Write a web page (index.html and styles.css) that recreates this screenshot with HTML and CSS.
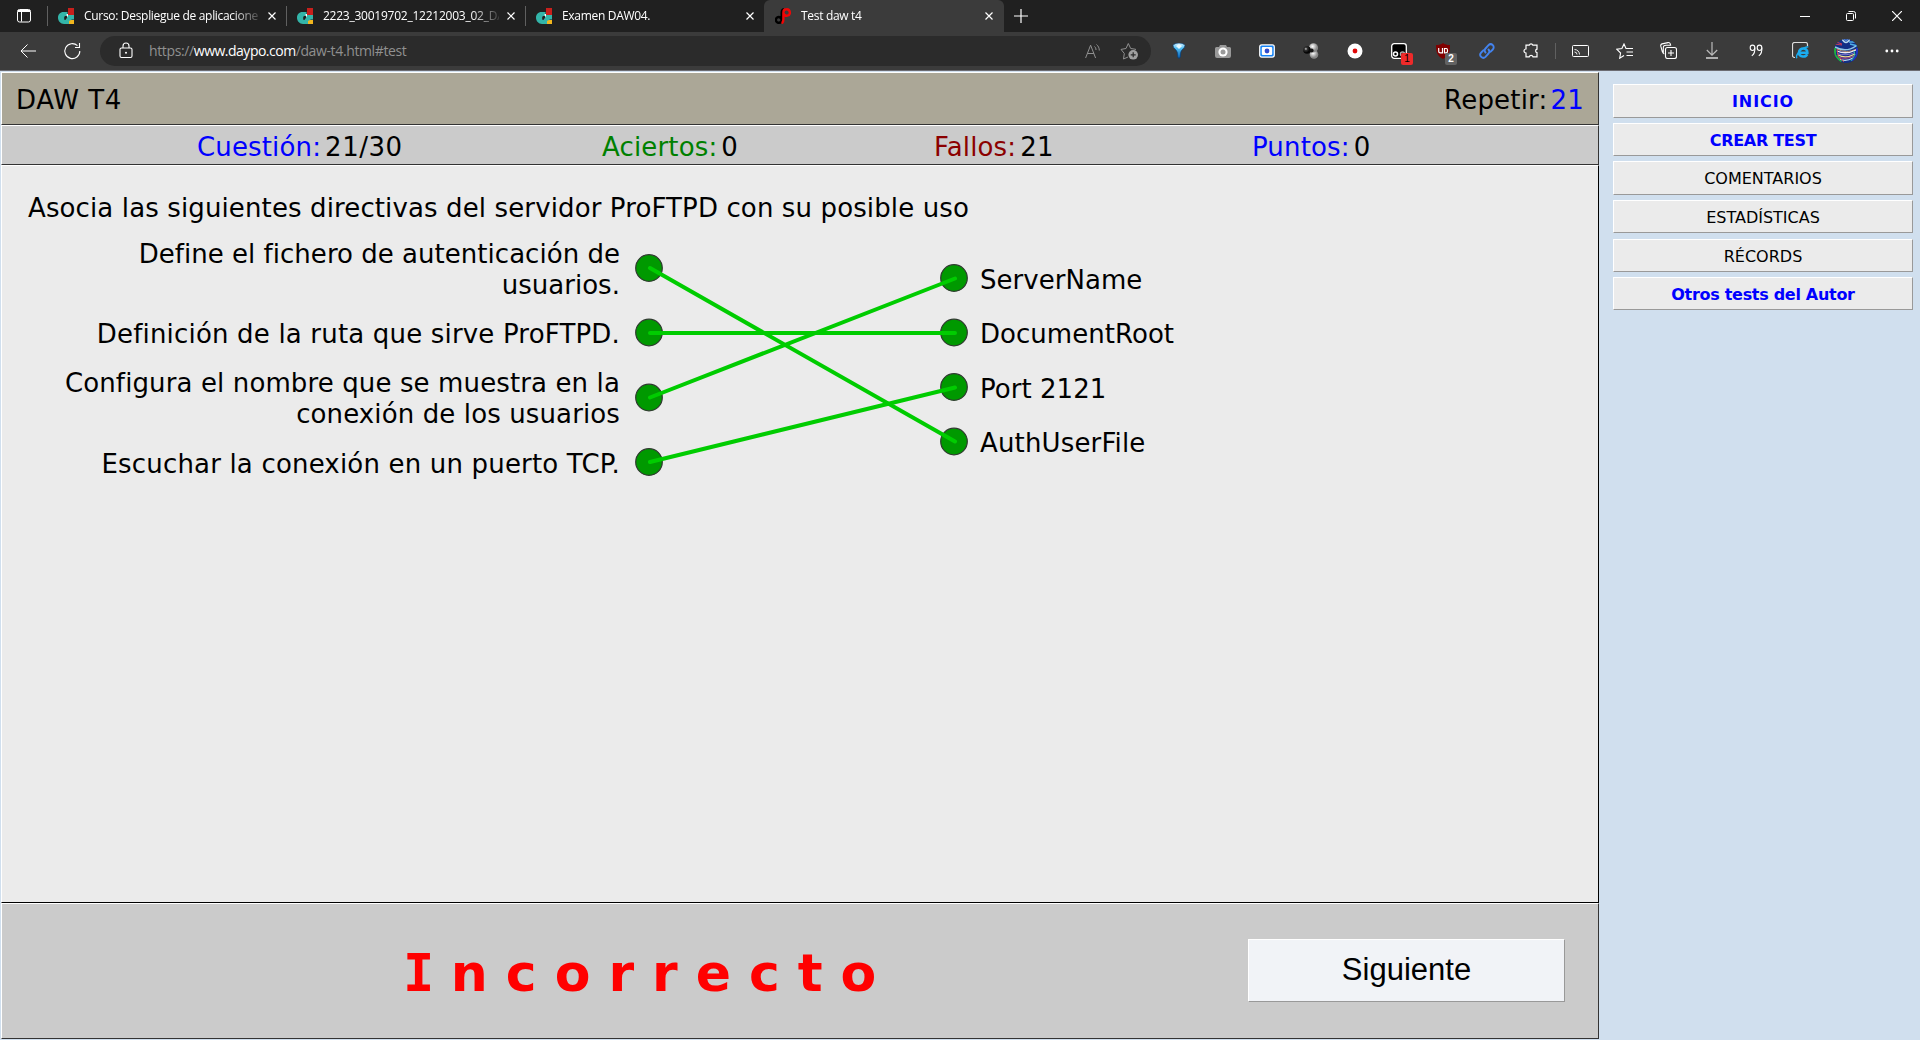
FILE: index.html
```
<!DOCTYPE html>
<html lang="es">
<head>
<meta charset="utf-8">
<title>Test daw t4</title>
<link rel="stylesheet" href="styles.css">
</head>
<body>
<svg class="defs" aria-hidden="true">
  <symbol id="course" viewBox="0 0 16 16">
    <path d="M10 0h6v7h-6z" fill="#c8201c"/>
    <path d="M11 12h5v4h-5z" fill="#f2b61e"/>
    <path d="M9.500 4H5.500C2 4 0 6.500 0 9.800S2.500 16 6 16h5v-3l3-1.500h2V7h-6.500z" fill="#33b5a9"/>
    <path d="M7 8h2v2.500H8v1.200H6.200V9z" fill="#202020"/>
    <path d="M8.500 6H10v2.500H9z" fill="#fff"/>
  </symbol>
  <symbol id="close" viewBox="0 0 8 8"><path d="M.5.5l7 7m0-7l-7 7" stroke="#fff" stroke-width="1.200" fill="none"/></symbol>
</svg>
<header class="browser">
  <div class="tabstrip">
    <div class="tab-menu">
      <svg width="16" height="16" viewBox="0 0 16 16" fill="none" stroke="#fff"><rect x="1.500" y="1.500" width="13" height="12.500" rx="2"/><path d="M2 3.500h12M5.500 4v9.500" /><path d="M2 3h12" stroke-width="2"/></svg>
    </div>
    <div class="tab"><svg class="fav"><use href="#course"/></svg><span class="tab-title">Curso: Despliegue de aplicacione</span><svg class="x"><use href="#close"/></svg></div>
    <div class="tab"><svg class="fav"><use href="#course"/></svg><span class="tab-title digits">2223_30019702_12212003_02_DA</span><svg class="x"><use href="#close"/></svg></div>
    <div class="tab"><svg class="fav"><use href="#course"/></svg><span class="tab-title">Examen DAW04.</span><svg class="x"><use href="#close"/></svg></div>
    <div class="tab active"><svg class="fav" viewBox="0 0 16 16" fill="none" stroke-width="2.400"><path d="M9 1.200C7 1.500 6.700 3 6.700 5v6.500c0 2-1 3.300-2.700 3.300a2.800 2.900 0 1 1 2.500-3" stroke="#000"/><path d="M6.500 15.300C8 15 8.400 13.500 8.400 11V4.500C8.400 2.500 9.500 1.300 11.500 1.300a3.200 3.200 0 1 1-2.900 4.200" stroke="#f00606"/></svg><span class="tab-title">Test daw t4</span><svg class="x"><use href="#close"/></svg></div>
    <svg class="newtab" viewBox="0 0 14 14"><path d="M7 0v14M0 7h14" stroke="#fff" stroke-width="1.200"/></svg>
    <div class="window-buttons">
      <span><svg width="10" height="10"><path d="M0 5.500h10" stroke="#fff"/></svg></span>
      <span><svg width="10" height="10" fill="none" stroke="#fff"><rect x=".5" y="2.500" width="7" height="7" rx="1"/><path d="M2.500 .5h5a2 2 0 0 1 2 2v5"/></svg></span>
      <span><svg width="10" height="10"><path d="M0 0l10 10M10 0L0 10" stroke="#fff" stroke-width="1.200"/></svg></span>
    </div>
  </div>
  <div class="toolbar">
    <span class="nav"><svg width="16" height="14" viewBox="0 0 16 14" fill="none" stroke="#fff"><path d="M16 7H1M7.500 .5L1 7l6.500 6.500"/></svg></span>
    <span class="nav"><svg width="18" height="18" viewBox="0 0 18 18" fill="none" stroke="#fff" stroke-width="1.100"><path d="M16.800 9A7.500 7.500 0 1 1 14.500 3.700M16.500 1v4.500H12"/></svg></span>
    <div class="address">
      <svg class="lock" width="14" height="17" viewBox="0 0 14 17" fill="none" stroke="#fff" stroke-width="1.100"><rect x="1" y="6" width="12" height="9.500" rx="1.500"/><path d="M4 6V4a3 3 0 0 1 6 0v2"/><circle cx="7" cy="10.800" r="1" fill="#fff" stroke="none"/></svg>
      <span class="url">https://<b>www.daypo.com</b>/daw-t4.html#test</span>
      <svg class="read" width="16" height="16" viewBox="0 0 16 16" fill="none" stroke="#909090"><path d="M.6 15L5.600 2.200 10.600 15M2.300 10.500H9"/><path d="M9.500 3.500c1 .8 1.500 2 1.500 3.500M11.500 1.500C13.300 3 14.300 5 14.300 7.500" /></svg>
      <svg class="fav-add" width="18" height="18" viewBox="0 0 18 18" fill="none" stroke="#909090"><path d="M8 15l-4.500 2 .8-5.500L1 7.400 6 6.500 8.300 1.500 10.700 6.500l5 .8-1 1"/><circle cx="13.200" cy="12.800" r="4.800" fill="#a0a0a0" stroke="none"/><path d="M13.200 10.300v5M10.700 12.800h5" stroke="#2b2b2b" stroke-width="1.200"/></svg>
    </div>
    <div class="tools">
      <span><svg width="16" height="16" viewBox="0 0 16 16"><defs><linearGradient id="gem" x2="0" y2="1"><stop offset="0" stop-color="#d7f3ff"/><stop offset=".35" stop-color="#51bdf2"/><stop offset="1" stop-color="#0458ac"/></linearGradient></defs><path d="M8 0c3 0 5.500 1.200 6 2.500-.3 3-3.800 4-4.300 7L9.300 14 8 15.500 6.700 14 6.300 9.500C5.800 6.500 2 5.500 2 2.500 2.500 1.200 5 0 8 0z" fill="url(#gem)" stroke="#063d77" stroke-width=".7"/><path d="M5 3l3 3 3-3-3-2z" fill="#e9f9ff"/></svg></span>
      <span><svg width="16" height="16" viewBox="0 0 16 16"><path d="M1.500 4H4l1-2h6l1 2h2.500A1.500 1.500 0 0 1 16 5.500V13a2 2 0 0 1-2 2H2a2 2 0 0 1-2-2V5.500A1.500 1.500 0 0 1 1.500 4z" fill="#999"/><circle cx="8" cy="9" r="4.600" fill="#fff"/><circle cx="8" cy="9" r="2.500" fill="#9a9a9a"/></svg></span>
      <span><svg width="16" height="14" viewBox="0 0 16 14"><rect x=".7" y=".9" width="14.600" height="12.200" rx="2" fill="#1683f5" stroke="#fff" stroke-width="1.200"/><rect x="2.800" y="3" width="10.400" height="8" rx="1" fill="#fff"/><circle cx="8" cy="7" r="2.400" fill="#304acb"/></svg></span>
      <span><svg width="16" height="16" viewBox="0 0 16 16"><defs><radialGradient id="b1" cx=".4" cy=".35"><stop offset="0" stop-color="#fff"/><stop offset="1" stop-color="#888"/></radialGradient><radialGradient id="b2" cx=".35" cy=".35"><stop offset="0" stop-color="#ccc"/><stop offset=".4" stop-color="#333"/><stop offset="1" stop-color="#050505"/></radialGradient></defs><circle cx="11" cy="11.500" r="4.300" fill="url(#b1)"/><circle cx="10.500" cy="4.800" r="4.600" fill="url(#b1)"/><circle cx="4" cy="7" r="3.800" fill="url(#b2)"/><circle cx="8.600" cy="7.500" r="2" fill="#151515"/></svg></span>
      <span><svg width="16" height="16"><circle cx="8" cy="8" r="7.500" fill="#fff"/><circle cx="8" cy="8" r="2.400" fill="#e00808"/></svg></span>
      <span><svg width="16" height="16" viewBox="0 0 16 16"><rect x=".7" y=".7" width="14.600" height="14.600" rx="2.500" fill="#000" stroke="#fff" stroke-width="1.300"/><circle cx="4.500" cy="11" r="2" fill="none" stroke="#fff" stroke-width="1.500"/><circle cx="11.500" cy="11" r="2" fill="none" stroke="#aaa" stroke-width="1.500"/></svg><i class="badge red">1</i></span>
      <span><svg width="16" height="16" viewBox="0 0 16 16"><path d="M8 0c2 1.500 4 2 7 2 0 7-1 11-7 14C2 13 1 9 1 2c3 0 5-.5 7-2z" fill="#800000"/><path d="M3.700 5v3.500q0 1.300 1.700 1.300H7.500V5M9.500 9.800V5.500h1.700q1.300 0 1.300 1.700v1q0 1.600-1.600 1.600z" fill="none" stroke="#fff" stroke-width="1.200"/></svg><i class="badge grey">2</i></span>
      <span><svg width="16" height="16" viewBox="0 0 16 16" fill="none" stroke="#4383ee" stroke-width="1.900" stroke-linecap="round"><path d="M6.500 9.500a3 3 0 0 1 0-4L9.500 2.200a3 3 0 0 1 4.300 4.300L11.700 8.700"/><path d="M9.500 6.500a3 3 0 0 1 0 4L6.500 13.800a3 3 0 0 1-4.300-4.300L4.300 7.300"/></svg></span>
      <span><svg width="16" height="16" viewBox="0 0 16 16" fill="none" stroke="#fff" stroke-width="1.200"><path d="M3 2.200h3.200a2 2 0 0 1 3.700 0H14v4a1.800 1.800 0 0 0 0 3.500v4.100h-4a2 2 0 0 0-3.800 0H3V10a2 2 0 1 1 0-4z"/></svg></span>
    </div>
    <div class="tools browser-tools">
      <span><svg width="17" height="14" viewBox="0 0 17 14" fill="none" stroke="#fff"><rect x=".5" y="1.500" width="16" height="11" rx="1"/><path d="M2.500 5.500a5 5 0 0 1 5 5M2.500 8a2.500 2.500 0 0 1 2.500 2.500" stroke-width=".9"/></svg></span>
      <span><svg width="17" height="16" viewBox="0 0 17 16" fill="none" stroke="#fff" stroke-width="1.100"><path d="M8 12.500l-4.300 2.700.9-5.200L.9 6.300 5.900 5.600 8 1l2 4.500h7M10.500 9H17M10.500 12.500H17"/></svg></span>
      <span><svg width="17" height="17" viewBox="0 0 17 17" fill="none" stroke="#fff" stroke-width="1.100"><rect x="5.500" y="5.500" width="11" height="11" rx="2"/><path d="M11 8v6M8 11h6M4.300 12C2.800 11.500 2.500 10.500 2.300 9.500L.8 4.200C.5 3 1 2.200 2 1.900L8 .6c1.200-.2 2 .4 2.300 1.300l.3 1.300H6C4 3.200 3.300 4 3.300 6v5"/></svg></span>
      <span><svg width="14" height="17" viewBox="0 0 14 17" fill="none" stroke="#fff" stroke-width="1.200"><path d="M7 0v13M1.800 8L7 13.200 12.200 8" stroke="#bbb"/><path d="M1 16h12"/></svg></span>
      <span><svg width="14" height="13" viewBox="0 0 14 13" fill="none" stroke="#fff" stroke-width="1.100"><ellipse cx="3.500" cy="3.800" rx="2.300" ry="2.700"/><path d="M5.800 3.500c.4 4-.4 6.500-3 8.300"/><ellipse cx="10.500" cy="3.800" rx="2.300" ry="2.700"/><path d="M12.800 3.500c.4 4-.4 6.500-3 8.300"/></svg></span>
      <span><svg width="17" height="17" viewBox="0 0 17 17" fill="none"><path d="M3 15.500H2.500a2 2 0 0 1-2-2v-11a2 2 0 0 1 2-2h11a2 2 0 0 1 2 2V4" stroke="#ddd" stroke-width="1.200"/><path d="M15.200 12.300c-1.200 3.200-8 3.300-8.200-1.700C7 5.200 15.500 5 15.400 10.700H8" stroke="#1bacf0" stroke-width="2.500"/><path d="M5 16.200C3 14 9 5.200 16.300 4.700" stroke="#1bacf0" stroke-width="1.400"/></svg></span>
    </div>
    <svg class="avatar" width="24" height="24" viewBox="0 0 24 24" fill="none">
      <defs><clipPath id="face"><circle cx="12" cy="12" r="12"/></clipPath></defs>
      <g clip-path="url(#face)"><path d="M0 0h24v24H0z" fill="#122f86"/>
      <path d="M0 5l8 1M2 3l6 2" stroke="#c23a55" stroke-width="1.200"/><path d="M16 5l8 2M15 3l6 0" stroke="#4fb0e8" stroke-width="1.300"/><path d="M8 0q4 7 8 0" stroke="#b8d8ef" stroke-width="1.500"/><path d="M10 0q2 3 4 0" stroke="#5585d0" stroke-width="1.500"/>
      <path d="M1 8q11 6 21-1" stroke="#8fc7e8" stroke-width="1.500"/><path d="M3 10q9 5 20 0" stroke="#e9a95f" stroke-width=".8"/><path d="M3 12q9 4 19-1" stroke="#efe9f5" stroke-width="1.300"/><path d="M3 14.500q9 3 18-1" stroke="#8d7bd8" stroke-width=".9"/><path d="M4 16q8 4 17-1" stroke="#f0dc8c" stroke-width="1.200"/><path d="M4 18q8 3 16-1" stroke="#e34b7e" stroke-width=".8"/><path d="M5 20q7 3 14-1" stroke="#bcdcf0" stroke-width="1.200"/><path d="M1 9v7l6 7" stroke="#1fae3d" stroke-width="2"/><path d="M3 10l1 7 6 6" stroke="#e8443b" stroke-width=".8"/><path d="M23 9v8l-5 5" stroke="#2233c8" stroke-width="2"/><path d="M20 12l1 4-4 6" stroke="#2ec5a5" stroke-width=".9"/></g>
    </svg>
    <svg class="more" width="14" height="4" fill="#fff"><circle cx="1.800" cy="2" r="1.400"/><circle cx="7" cy="2" r="1.400"/><circle cx="12.200" cy="2" r="1.400"/></svg>
  </div>
</header>
<div class="page">
  <main class="test">
    <div class="panel title-bar">
      <span class="name">DAW T4</span>
      <span class="stat"><span>Repetir:</span><span class="blue">21</span></span>
    </div>
    <div class="panel status-bar">
      <span class="stat"><span class="blue">Cuestión:</span><span class="count">21/30</span></span>
      <span class="stat"><span class="green">Aciertos:</span><span>0</span></span>
      <span class="stat"><span class="maroon">Fallos:</span><span>21</span></span>
      <span class="stat"><span class="blue">Puntos:</span><span>0</span></span>
    </div>
    <section class="panel question">
      <p class="statement">Asocia las siguientes directivas del servidor ProFTPD con su posible uso</p>
      <div class="board">
        <ul class="left">
          <li>Define el fichero de autenticación de usuarios.</li>
          <li class="wide">Definición de la ruta que sirve ProFTPD.</li>
          <li class="mid">Configura el nombre que se muestra en la conexión de los usuarios</li>
          <li class="wide">Escuchar la conexión en un puerto TCP.</li>
        </ul>
        <svg class="links" width="340" height="260" viewBox="0 0 340 260">
          <g fill="#090" stroke="#303a30" stroke-width="1.200">
            <circle cx="18" cy="33" r="13.300"/><circle cx="18" cy="97.500" r="13.300"/><circle cx="18" cy="162.500" r="13.300"/><circle cx="18" cy="227" r="13.300"/>
            <circle cx="323" cy="43" r="13.300"/><circle cx="323" cy="97.500" r="13.300"/><circle cx="323" cy="152" r="13.300"/><circle cx="323" cy="206.500" r="13.300"/>
          </g>
          <g stroke="#0c0" stroke-width="4" stroke-linecap="round">
            <path d="M19 33l305 173.500M19 98h305M19 162.500L324 43.500M19 227L324 152.500"/>
          </g>
        </svg>
        <ul class="right">
          <li>ServerName</li>
          <li>DocumentRoot</li>
          <li>Port 2121</li>
          <li class="wide">AuthUserFile</li>
        </ul>
      </div>
    </section>
    <footer class="panel result">
      <strong class="verdict"><span class="cap">I</span>ncorrecto</strong>
      <button class="next">Siguiente</button>
    </footer>
  </main>
  <nav class="side">
    <a class="key home">INICIO</a>
    <a class="key">CREAR TEST</a>
    <a>COMENTARIOS</a>
    <a>ESTADÍSTICAS</a>
    <a>RÉCORDS</a>
    <a class="key">Otros tests del Autor</a>
  </nav>
</div>
</body>
</html>
```
FILE: styles.css
```
* { box-sizing: border-box; }
body {
  margin: 0;
  height: 1040px;
  overflow: hidden;
  background: #d0dfee;
  color: #000;
  font: 26px/31px "DejaVu Sans", Verdana, sans-serif;
}
.defs { display: none; }
svg { display: block; flex: none; }
ul, p { margin: 0; padding: 0; list-style: none; }

/* browser chrome */
.browser { font: 12px/16px "Open Sans", "Segoe UI", sans-serif; color: #fff; }
.tabstrip { display: flex; align-items: center; height: 32px; background: #202020; }
.tab-menu { display: flex; justify-content: center; width: 47px; }
.tab {
  display: flex;
  align-items: center;
  width: 239px;
  height: 32px;
  padding-left: 11px;
  background: linear-gradient(#606060, #606060) 0 6px / 1px 20px no-repeat;
}
.tab.active { width: 240px; background: #3b3b3b; border-radius: 6px 6px 0 0; }
.fav { width: 16px; height: 16px; }
.tab-title {
  width: 176px;
  margin-left: 10px;
  white-space: nowrap;
  letter-spacing: -.31px;
  -webkit-mask-image: linear-gradient(to right, #000 148px, transparent 180px);
  mask-image: linear-gradient(to right, #000 148px, transparent 180px);
}
.digits { letter-spacing: -.24px; }
.x { width: 8px; height: 8px; margin-left: 8px; }
.newtab { width: 14px; height: 14px; margin-left: 10px; }
.window-buttons { display: flex; margin-left: auto; }
.window-buttons span { display: flex; justify-content: center; width: 46px; }

.toolbar {
  display: flex;
  align-items: center;
  height: 39px;
  padding: 0 21px 1px 6px;
  background: #3b3b3b;
  border-bottom: 1px solid #6c6c72;
}
.nav { display: flex; justify-content: center; width: 44px; }
.address {
  display: flex;
  align-items: center;
  width: 1051px;
  height: 30px;
  margin-left: 6px;
  padding-left: 19px;
  border-radius: 15px;
  background: #2b2b2b;
}
.url { margin-left: 16px; padding-top: 1px; font-size: 14px; line-height: 20px; letter-spacing: -.37px; color: #909090; }
.url b { font-weight: 400; color: #fff; letter-spacing: -.5px; }
.read { margin-left: auto; }
.fav-add { margin: 0 13px 0 19px; }
.tools { display: flex; margin-left: 6px; }
.tools span { position: relative; display: flex; align-items: center; justify-content: center; width: 44px; height: 36px; }
.browser-tools { margin-left: 2px; padding-left: 3px; background: linear-gradient(#606060, #606060) 0 10px / 1px 16px no-repeat; }
.badge {
  position: absolute;
  left: 24px;
  top: 20px;
  width: 12px;
  height: 12px;
  border-radius: 2px;
  font: 10px/12px "Liberation Sans", sans-serif;
  text-align: center;
}
.red { background: #ee2a2a; color: #000; }
.grey { background: #626262; color: #fff; font-weight: 700; }
.avatar { margin-left: 12px; }
.more { margin-left: auto; }

/* page */
.page { display: flex; padding: 1px 0 0 1px; }
.test { width: 1598px; }
.panel {
  display: flex;
  border: 1px solid #fff;
  border-right-color: #333;
  border-bottom-color: #333;
  background: #cbcbcb;
}
.blue { color: #00f; }
.green { color: #008000; }
.maroon { color: #8b0000; }
.stat { display: flex; gap: 4px; }
.title-bar {
  align-items: center;
  justify-content: space-between;
  height: 53px;
  padding: 4px 14px 0;
  background: #aba797;
  letter-spacing: .2px;
}
.name { letter-spacing: .6px; }
.title-bar .stat { gap: 3px; }
.status-bar {
  display: grid;
  grid-template-columns: 405px 332px 318px 1fr;
  align-items: center;
  height: 40px;
  padding: 4px 0 0 195px;
  letter-spacing: .15px;
}
.count { letter-spacing: .5px; }
.question {
  flex-direction: column;
  height: 738px;
  padding: 27px 0 0 26px;
  background: #ebebeb;
  border-right-color: #000;
  border-bottom-color: #000;
}
.statement { letter-spacing: .122px; }
.board { display: flex; margin-top: 11px; }
.left { width: 592px; text-align: right; letter-spacing: .03px; }
.left li { display: flex; flex-direction: column; justify-content: center; height: 65px; padding: 3px 0 0 20px; }
.left li:first-child { padding-top: 4px; }
.left .mid { letter-spacing: .12px; }
.left .wide { letter-spacing: .18px; }
.links { margin-left: 11px; }
.right { padding-top: 16px; margin-left: 9px; letter-spacing: .04px; }
.right li { display: flex; align-items: center; height: 54.5px; padding-top: 4px; }
.right .wide { letter-spacing: .15px; }
.result { align-items: center; height: 136px; }
.verdict { margin: 4px 0 0 401px; font-size: 52px; line-height: 62px; letter-spacing: 18px; color: #f00; }
.cap { font-family: "DejaVu Sans Mono", monospace; margin-right: -1.500px; }
.next {
  width: 317px;
  height: 63px;
  margin: 0 33px 1px auto;
  padding: 0 0 1px;
  border: 1px solid #fff;
  border-right-color: #999;
  border-bottom-color: #999;
  background: #f1f3f7;
  color: #000;
  font: 31px "Liberation Sans", Arial, sans-serif;
}
.side { display: flex; flex-direction: column; gap: 5.2px; width: 300px; margin: 12.200px 0 0 14px; }
.side a {
  height: 33.4px;
  border: 1px solid #fff;
  border-right-color: #999;
  border-bottom-color: #999;
  background: #ebebeb;
  font-size: 16px;
  line-height: 33px;
  text-align: center;
}
.side .key { color: #00f; font-weight: 700; letter-spacing: -.3px; }
.side .home { letter-spacing: .9px; }
```
